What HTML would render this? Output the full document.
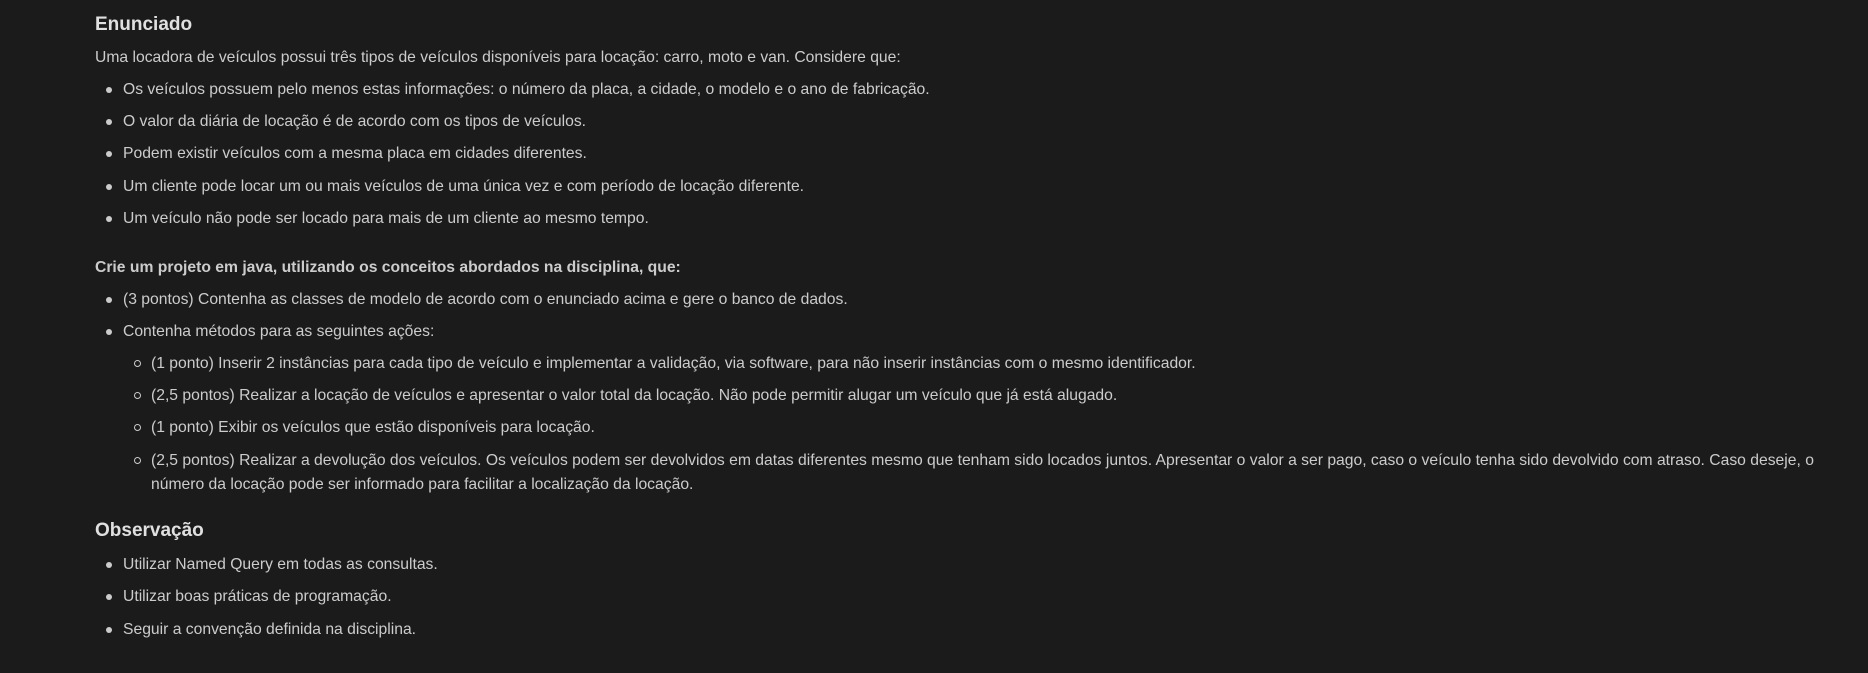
<!DOCTYPE html>
<html><head><meta charset="utf-8"><style>
body{margin:0;background:#1b1b1b;width:1868px;height:673px;overflow:hidden;font-family:"Liberation Sans",sans-serif;color:#cccccc;font-size:15.7px;}
.l{position:absolute;white-space:nowrap;line-height:24px;}
h{position:absolute;left:95px;font-size:19px;font-weight:bold;color:#e0e0e0;line-height:28px;white-space:nowrap}
.b::before{content:"";position:absolute;left:-17px;top:9px;width:6px;height:6px;border-radius:50%;background:#cccccc}
.c::before{content:"";position:absolute;left:-17px;top:8px;width:5px;height:5px;border-radius:50%;border:1px solid #cccccc}
</style></head><body>
<h style="top:11px">Enunciado</h>
<div class="l" style="left:95px;top:46px">Uma locadora de veículos possui três tipos de veículos disponíveis para locação: carro, moto e van. Considere que:</div>
<div class="l b" style="left:123px;top:78px">Os veículos possuem pelo menos estas informações: o número da placa, a cidade, o modelo e o ano de fabricação.</div>
<div class="l b" style="left:123px;top:110px">O valor da diária de locação é de acordo com os tipos de veículos.</div>
<div class="l b" style="left:123px;top:142px">Podem existir veículos com a mesma placa em cidades diferentes.</div>
<div class="l b" style="left:123px;top:175px">Um cliente pode locar um ou mais veículos de uma única vez e com período de locação diferente.</div>
<div class="l b" style="left:123px;top:207px">Um veículo não pode ser locado para mais de um cliente ao mesmo tempo.</div>
<div class="l" style="left:95px;top:256px;font-weight:bold">Crie um projeto em java, utilizando os conceitos abordados na disciplina, que:</div>
<div class="l b" style="left:123px;top:288px">(3 pontos) Contenha as classes de modelo de acordo com o enunciado acima e gere o banco de dados.</div>
<div class="l b" style="left:123px;top:320px">Contenha métodos para as seguintes ações:</div>
<div class="l c" style="left:151px;top:352px">(1 ponto) Inserir 2 instâncias para cada tipo de veículo e implementar a validação, via software, para não inserir instâncias com o mesmo identificador.</div>
<div class="l c" style="left:151px;top:384px">(2,5 pontos) Realizar a locação de veículos e apresentar o valor total da locação. Não pode permitir alugar um veículo que já está alugado.</div>
<div class="l c" style="left:151px;top:416px">(1 ponto) Exibir os veículos que estão disponíveis para locação.</div>
<div class="l c" style="left:151px;top:449px">(2,5 pontos) Realizar a devolução dos veículos. Os veículos podem ser devolvidos em datas diferentes mesmo que tenham sido locados juntos. Apresentar o valor a ser pago, caso o veículo tenha sido devolvido com atraso. Caso deseje, o</div>
<div class="l" style="left:151px;top:473px">número da locação pode ser informado para facilitar a localização da locação.</div>
<h style="top:517px">Observação</h>
<div class="l b" style="left:123px;top:553px">Utilizar Named Query em todas as consultas.</div>
<div class="l b" style="left:123px;top:585px">Utilizar boas práticas de programação.</div>
<div class="l b" style="left:123px;top:618px">Seguir a convenção definida na disciplina.</div>
</body></html>
